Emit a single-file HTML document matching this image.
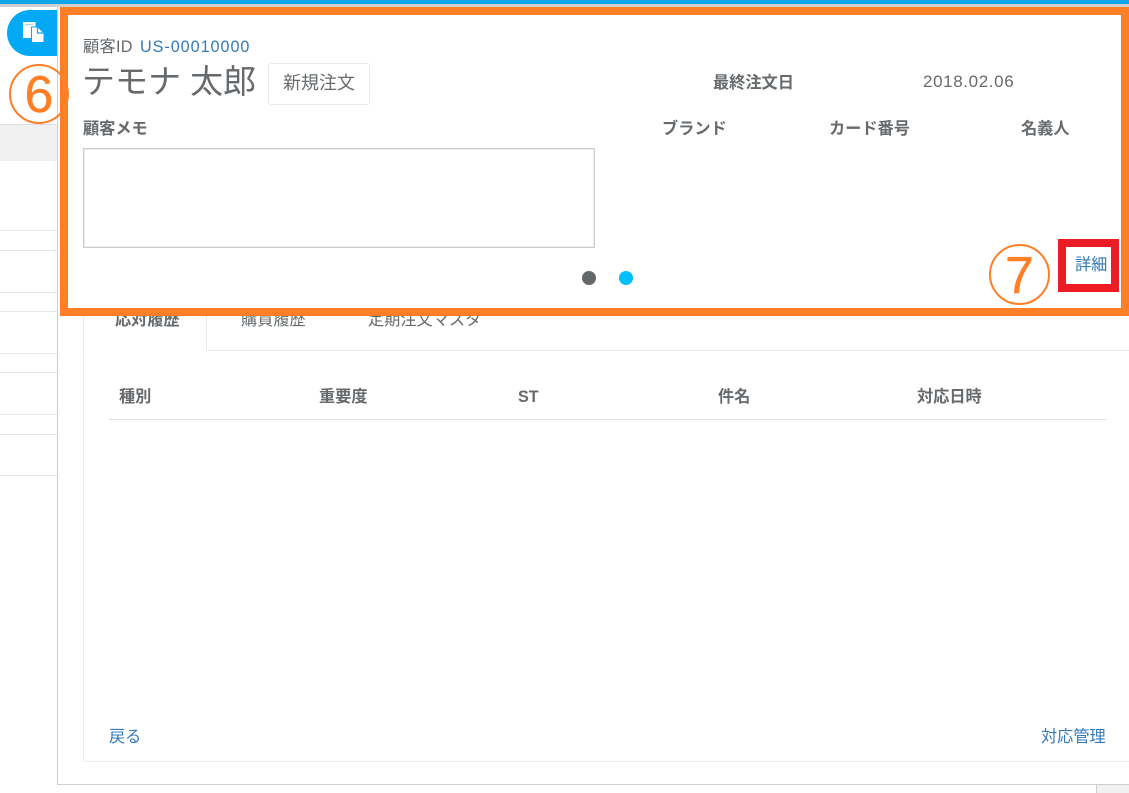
<!DOCTYPE html>
<html lang="ja"><head><meta charset="utf-8"><style>
html,body{margin:0;padding:0;width:1129px;height:793px;overflow:hidden;background:#fff}
body{position:relative;font-family:"Liberation Sans","Noto Sans CJK JP",sans-serif;color:#666a6d;font-size:16.2px}
.a{position:absolute}
.t{position:absolute;white-space:nowrap;line-height:20px}
.b{font-weight:700}
.l{color:#337ab7}
</style></head><body>
<div class="a" style="left:0;top:0;width:1129px;height:4px;background:#0ea5e9"></div>
<div class="a" style="left:0;top:4px;width:1129px;height:3px;background:#cfcfcf"></div>

<!-- left behind -->
<div class="a" style="left:7px;top:10px;width:50px;height:46px;background:#03a9f4;border-radius:23px 0 0 23px"></div>
<svg class="a" style="left:22px;top:21px" width="24" height="22" viewBox="0 0 24 22"><path d="M1 1h12.500v16H1z" fill="#fff"/><rect x="3" y="3" width="8" height="1.200" fill="#9fdcf9"/><path d="M9.500 6h6.500l6 6v9.500H9.500z" fill="#fff" stroke="#03a9f4" stroke-width="1"/><path d="M15.500 6.500v5.500h6" fill="none" stroke="#03a9f4" stroke-width="1.200"/></svg>
<div class="a" style="left:0;top:124px;width:57px;height:37px;background:#f1f1f1;border-top:1px solid #ddd;box-sizing:border-box"></div>
<div class="a" style="left:0;top:230px;width:57px;height:1px;background:#e6eaea"></div>
<div class="a" style="left:0;top:250px;width:57px;height:1px;background:#e6e6e6"></div>
<div class="a" style="left:0;top:292px;width:57px;height:1px;background:#e6e6e6"></div>
<div class="a" style="left:0;top:311px;width:57px;height:1px;background:#e6e6e6"></div>
<div class="a" style="left:0;top:353px;width:57px;height:1px;background:#e6e6e6"></div>
<div class="a" style="left:0;top:372px;width:57px;height:1px;background:#e6e6e6"></div>
<div class="a" style="left:0;top:414px;width:57px;height:1px;background:#e6e6e6"></div>
<div class="a" style="left:0;top:434px;width:57px;height:1px;background:#e6e6e6"></div>
<div class="a" style="left:0;top:475px;width:57px;height:1px;background:#e6e6e6"></div>

<!-- modal -->
<div class="a" style="left:57px;top:7px;width:1px;height:778px;background:#cfcfcf"></div>
<div class="a" style="left:57px;top:784px;width:1072px;height:1px;background:#cfcfcf"></div>
<div class="a" style="left:1096px;top:785px;width:1px;height:8px;background:#cfcfcf"></div>
<div class="a" style="left:1097px;top:785px;width:32px;height:8px;background:#f1f1f1"></div>

<!-- panel -->
<div class="a" style="left:83px;top:350px;width:1046px;height:412px;box-sizing:border-box;border:1px solid #ececec;border-top:0;border-right:0;border-radius:0 0 0 3px"></div>
<div class="a" style="left:206px;top:350px;width:923px;height:1px;background:#e4e7e7"></div>
<div class="a" style="left:83px;top:290px;width:124px;height:61px;box-sizing:border-box;border:1px solid #e8eaea;border-bottom:0;border-radius:4px 4px 0 0;background:#fff"></div>
<div class="t b" style="left:115px;top:310px">応対履歴</div>
<div class="t" style="left:241px;top:310px">購買履歴</div>
<div class="t" style="left:368px;top:310px">定期注文マスタ</div>

<div class="t b" style="left:119px;top:387px">種別</div>
<div class="t b" style="left:319px;top:387px">重要度</div>
<div class="t b" style="left:518px;top:387px">ST</div>
<div class="t b" style="left:718px;top:387px">件名</div>
<div class="t b" style="left:917px;top:387px">対応日時</div>
<div class="a" style="left:109px;top:419px;width:997px;height:1px;background:#dcdfdf"></div>
<div class="t l" style="left:109px;top:727px">戻る</div>
<div class="t l" style="left:1041px;top:727px">対応管理</div>

<!-- card -->
<div class="a" style="left:60px;top:7px;width:1069px;height:309px;box-sizing:border-box;border:8px solid #ff7f27;background:#fff"></div>
<div class="t" style="left:83px;top:37px;letter-spacing:.3px">顧客ID</div>
<div class="t l" style="left:140px;top:37px;letter-spacing:.95px">US-00010000</div>
<div class="t" style="left:82px;top:63px;font-size:33px;line-height:38px">テモナ 太郎</div>
<div class="a" style="left:268px;top:63px;width:102px;height:42px;box-sizing:border-box;border:1px solid #e8eaea;border-radius:3px;text-align:center;line-height:38px;font-size:18px">新規注文</div>
<div class="t b" style="left:713px;top:73px">最終注文日</div>
<div class="t" style="left:923px;top:72px;font-size:17px;letter-spacing:.62px">2018.02.06</div>
<div class="t b" style="left:83px;top:119px">顧客メモ</div>
<div class="t b" style="left:662px;top:119px">ブランド</div>
<div class="t b" style="left:829px;top:119px">カード番号</div>
<div class="t b" style="left:1021px;top:119px">名義人</div>
<div class="a" style="left:83px;top:148px;width:512px;height:100px;box-sizing:border-box;border:1px solid #cdcdcd;box-shadow:inset 0 0 0 1px #ececec;background:#fff"></div>
<div class="a" style="left:582px;top:271px;width:14px;height:14px;border-radius:50%;background:#64686b"></div>
<div class="a" style="left:619px;top:271px;width:14px;height:14px;border-radius:50%;background:#00bfff"></div>

<!-- red box -->
<div class="a" style="left:1058px;top:239px;width:61px;height:53px;box-sizing:border-box;border:8px solid #ed1c24;background:#fff"></div>
<div class="t l" style="left:1075px;top:255px">詳細</div>

<!-- circled numbers -->
<div class="a" style="left:9px;top:64px;width:60px;height:60px;box-sizing:border-box;border:2px solid #ff7f27;border-radius:50%;clip-path:inset(0 9px 0 0)"></div>
<div class="a" style="left:68px;top:64px;width:2px;height:60px;overflow:hidden"><div style="position:absolute;left:-59px;top:0;width:60px;height:60px;box-sizing:border-box;border:2px solid #ff7f27;border-radius:50%"></div></div>
<div class="t" style="left:9px;top:65px;width:60px;text-align:center;color:#ff7f27;font-size:52px;line-height:60px;-webkit-text-stroke:.4px #ff7f27">6</div>
<div class="a" style="left:989px;top:244px;width:61px;height:61px;box-sizing:border-box;border:2px solid #ff7f27;border-radius:50%"></div>
<div class="t" style="left:989px;top:246px;width:61px;text-align:center;color:#ff7f27;font-size:52px;line-height:60px;-webkit-text-stroke:.4px #ff7f27">7</div>
</body></html>
